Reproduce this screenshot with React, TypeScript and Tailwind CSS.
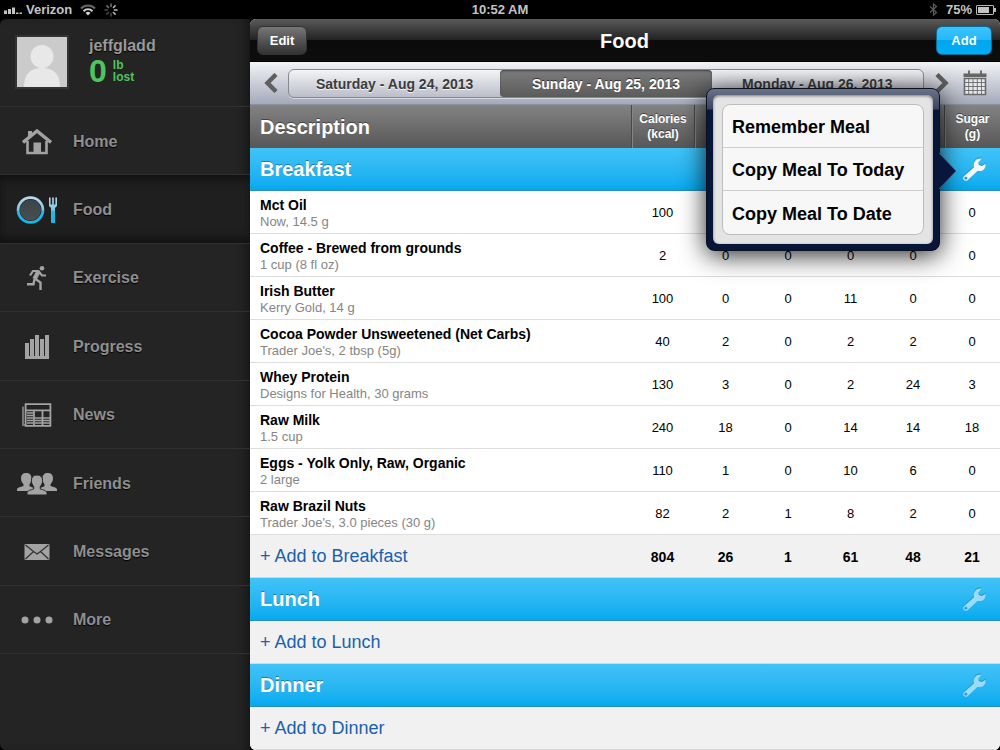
import type { ReactNode } from 'react';
import clsx from 'clsx';

interface FoodItem {
  name: string;
  detail: string;
  values: number[];
}

interface Meal {
  name: string;
  items: FoodItem[];
  totals?: number[];
}

const columns = [
  { label: 'Calories', unit: '(kcal)' },
  { label: 'Carbs', unit: '(g)' },
  { label: 'Fiber', unit: '(g)' },
  { label: 'Fat', unit: '(g)' },
  { label: 'Protein', unit: '(g)' },
  { label: 'Sugar', unit: '(g)' },
];

const meals: Meal[] = [
  {
    name: 'Breakfast',
    items: [
      { name: 'Mct Oil', detail: 'Now, 14.5 g', values: [100, 0, 0, 14, 0, 0] },
      { name: 'Coffee - Brewed from grounds', detail: '1 cup (8 fl oz)', values: [2, 0, 0, 0, 0, 0] },
      { name: 'Irish Butter', detail: 'Kerry Gold, 14 g', values: [100, 0, 0, 11, 0, 0] },
      { name: 'Cocoa Powder Unsweetened (Net Carbs)', detail: "Trader Joe's, 2 tbsp (5g)", values: [40, 2, 0, 2, 2, 0] },
      { name: 'Whey Protein', detail: 'Designs for Health, 30 grams', values: [130, 3, 0, 2, 24, 3] },
      { name: 'Raw Milk', detail: '1.5 cup', values: [240, 18, 0, 14, 14, 18] },
      { name: 'Eggs - Yolk Only, Raw, Organic', detail: '2 large', values: [110, 1, 0, 10, 6, 0] },
      { name: 'Raw Brazil Nuts', detail: "Trader Joe's, 3.0 pieces (30 g)", values: [82, 2, 1, 8, 2, 0] },
    ],
    totals: [804, 26, 1, 61, 48, 21],
  },
  { name: 'Lunch', items: [] },
  { name: 'Dinner', items: [] },
];

const days = ['Saturday - Aug 24, 2013', 'Sunday - Aug 25, 2013', 'Monday - Aug 26, 2013'];

const mealActions = ['Remember Meal', 'Copy Meal To Today', 'Copy Meal To Date'];

function HomeIcon() {
  return (
    <svg width="30" height="26" viewBox="0 0 30 26" fill="none">
      <path d="M6 10V2h4v4" fill="#a3a3a3" />
      <path d="M1 13.5 15 2l14 11.5" stroke="#a3a3a3" strokeWidth="3.4" />
      <path d="M5.5 12v12h19V12" stroke="#a3a3a3" strokeWidth="2.6" />
      <path d="M11.5 13.5h7.5V24h-7.5z" fill="#a3a3a3" />
    </svg>
  );
}

function FoodIcon() {
  return (
    <svg width="42" height="28" viewBox="0 0 42 28" fill="none">
      <defs>
        <linearGradient id="food" x1="0" y1="0" x2="0" y2="28" gradientUnits="userSpaceOnUse">
          <stop offset="0" stopColor="#c3dcec" />
          <stop offset="0.5" stopColor="#7cc4e6" />
          <stop offset="0.55" stopColor="#2bb6e8" />
          <stop offset="1" stopColor="#12b8ea" />
        </linearGradient>
        <linearGradient id="plate" x1="0" y1="0" x2="0" y2="1">
          <stop offset="0" stopColor="#39444a" />
          <stop offset="1" stopColor="#4a4f50" />
        </linearGradient>
      </defs>
      <circle cx="14.5" cy="14" r="12.4" stroke="url(#food)" strokeWidth="2.8" fill="#15171a" />
      <circle cx="14.5" cy="14" r="10.6" fill="url(#plate)" />
      <path d="M33 1.5h1.6v7h1.6v-7h1.6v7h1.6v-7H41v8.500l-2 2V27h-4V12l-2-2z" fill="url(#food)" />
    </svg>
  );
}

function ExerciseIcon() {
  return (
    <svg width="22" height="26" viewBox="0 0 22 26" fill="none" stroke="#a3a3a3">
      <circle cx="16" cy="3.2" r="2.3" fill="#a3a3a3" stroke="none" />
      <path d="M4 10.5 7 6h5.500l3.500 4.500h4" strokeWidth="2.2" />
      <path d="M12.5 6.5 8.5 14" strokeWidth="4.5" />
      <path d="M8.5 14 7.500 19.200H1" strokeWidth="2.4" />
      <path d="m9.5 14 5 3.500V25" strokeWidth="2.4" />
    </svg>
  );
}

function ProgressIcon() {
  return (
    <svg width="24" height="26" viewBox="0 0 24 26" fill="#a3a3a3">
      <path d="M0 9h4v13h1V5h4v17h1V1h4v21h1V5h4v17h1V1h4v24H0z" />
    </svg>
  );
}

function NewsIcon() {
  return (
    <svg width="30" height="24" viewBox="0 0 30 24" fill="none" stroke="#a3a3a3">
      <path d="M1 3.500V22h2" strokeWidth="2" stroke="#777" />
      <path d="M3.600 1.100h24.800v21.800H3.600z" strokeWidth="1.800" />
      <path d="M4 7.300h24M12 7.500V22M20.500 7.500V22" strokeWidth="1.800" />
      <path
        d="M5 10h6M5 12.500h6M5 15h6M5 17.500h6M5 20h6M13 15h7M13 17.500h7M13 20h7M21 15h7M21 17.500h7M21 20h7"
        strokeWidth="1.400"
      />
    </svg>
  );
}

function FriendsIcon() {
  return (
    <svg width="42" height="24" viewBox="0 0 42 24" fill="#a3a3a3">
      <path d="M10 1c3.800 0 5.500 2 5.500 5.300 0 2.800-.8 4.500-2 6v2l5 2V19H1v-1.500c0-2 4-2.600 6.500-3.500v-1.700c-1.300-1.500-2.500-3.200-2.500-6C5 3 6.700 1 10 1z" />
      <path d="M32 1c-3.800 0-5.500 2-5.500 5.300 0 2.800.8 4.500 2 6v2l-5 2V19h17.500v-1.500c0-2-4-2.600-6.500-3.500v-1.700c1.300-1.500 2.500-3.200 2.500-6C37 3 35.300 1 32 1z" />
      <path
        d="M21 3c3.600 0 5.600 2 5.600 5.500 0 2.600-1 4.500-2.300 6V17c2.500.8 6.700 1.700 6.700 3.800V23H11v-2.200c0-2.100 4.200-3 6.700-3.800v-2.500c-1.300-1.500-2.300-3.400-2.300-6C15.400 5 17.400 3 21 3z"
        stroke="#242424"
        strokeWidth="1"
      />
    </svg>
  );
}

function MessagesIcon() {
  return (
    <svg width="26" height="18" viewBox="0 0 26 18" fill="none">
      <rect x="0.500" y="1" width="25" height="16" rx="1" fill="#a3a3a3" />
      <path d="m1.500 2 8 6.500L13 11l3.500-2.500 8-6.500M1.500 16l8-7.500M24.500 16l-8-7.500" stroke="#303030" strokeWidth="1.200" />
    </svg>
  );
}

function MoreIcon() {
  return (
    <svg width="32" height="8" viewBox="0 0 32 8" fill="#a3a3a3">
      <circle cx="4" cy="4" r="3.500" />
      <circle cx="16" cy="4" r="3.500" />
      <circle cx="28" cy="4" r="3.500" />
    </svg>
  );
}

const navItems: { label: string; icon: ReactNode }[] = [
  { label: 'Home', icon: <HomeIcon /> },
  { label: 'Food', icon: <FoodIcon /> },
  { label: 'Exercise', icon: <ExerciseIcon /> },
  { label: 'Progress', icon: <ProgressIcon /> },
  { label: 'News', icon: <NewsIcon /> },
  { label: 'Friends', icon: <FriendsIcon /> },
  { label: 'Messages', icon: <MessagesIcon /> },
  { label: 'More', icon: <MoreIcon /> },
];

function StatusBar() {
  return (
    <div className="grid h-[19px] grid-cols-3 items-center bg-black px-1 text-[13px] leading-[19px] font-bold text-[#c4c4c4]">
      <div className="flex items-center gap-1">
        <svg width="18" height="8" viewBox="0 0 18 8" fill="#c4c4c4">
          <path d="M0 4.500h3V8H0zM4 3h3v5H4zM8 1.500h3V8H8zM12 6.500h2.500V8H12zM15.500 6.500H18V8h-2.500z" />
        </svg>
        <span>Verizon</span>
        <svg className="ml-1" width="16" height="12" viewBox="0 0 16 12" fill="none">
          <path d="M1 4.500c4-4 10-4 14 0" stroke="#666" strokeWidth="2" />
          <path d="M3.500 7.200c2.700-2.600 6.300-2.600 9 0" stroke="#d0d0d0" strokeWidth="2" />
          <path d="m8 11.500-2.500-2.600c1.500-1.400 3.500-1.400 5 0z" fill="#d0d0d0" />
        </svg>
        <svg className="ml-1" width="14" height="14" viewBox="0 0 14 14" strokeWidth="1.500" strokeLinecap="round">
          <path d="M7 1v2.500M2.800 2.800l1.700 1.700" stroke="#777" />
          <path d="M11.200 2.800 9.500 4.500M13 7h-2.500M11.200 11.200 9.500 9.500" stroke="#c0c0c0" />
          <path d="M7 13v-2.500M2.800 11.200l1.700-1.700M1 7h2.500" stroke="#4a4a4a" />
        </svg>
      </div>
      <div className="text-center">10:52 AM</div>
      <div className="flex items-center justify-end">
        <svg className="mr-2" width="9" height="13" viewBox="0 0 9 13" fill="none" stroke="#5c5c5c" strokeWidth="1.200">
          <path d="m1 3.500 6.500 6L4.500 12V1l3 2.500L1 9.500" />
        </svg>
        <span>75%</span>
        <svg className="ml-1" width="20" height="10" viewBox="0 0 20 10" fill="none">
          <rect x="0.500" y="0.500" width="17" height="9" rx="0.500" stroke="#b8b8b8" />
          <rect x="2" y="2" width="11" height="6" fill="#c4c4c4" />
          <path d="M18 3h2v4h-2z" fill="#b8b8b8" />
        </svg>
      </div>
    </div>
  );
}

function Sidebar() {
  return (
    <aside className="w-[250px] shrink-0 rounded-l-md bg-[#242424] shadow-[inset_-8px_0_8px_-4px_#161616]">
      <div className="flex h-[88px] items-start border-b border-[#303030] pt-4 pl-[15px]">
        <div className="border-2 border-[#333] bg-[#cbcbcb]">
          <svg width="50" height="50" viewBox="0 0 50 50" fill="#e8e8e8">
            <circle cx="25" cy="19.500" r="11.500" />
            <path d="M7 50c0-13 6-19 18-19s18 6 18 19z" />
          </svg>
        </div>
        <div className="ml-5 pt-[2px] font-bold">
          <div className="text-base leading-[18px] text-[#9a9a9a] [text-shadow:0_1px_1px_#000]">jeffgladd</div>
          <div className="flex items-center gap-[6px] text-[#50c45d]">
            <span className="text-[32px] leading-[32px]">0</span>
            <span className="text-[12px] leading-[12px]">
              lb
              <br />
              lost
            </span>
          </div>
        </div>
      </div>
      <nav className="grid h-[547px] grid-rows-8">
        {navItems.map((item) => (
          <a
            key={item.label}
            href="#"
            className={clsx(
              'flex items-center border-b border-[#303030] pt-[2px] text-base font-bold text-[#8f8f8f] [text-shadow:0_1px_1px_#000]',
              item.label === 'Food' && 'bg-[#1f1f1f] shadow-[inset_0_8px_8px_-4px_#111,inset_0_-8px_8px_-4px_#111]',
            )}
          >
            <span className="flex w-[73px] justify-center">{item.icon}</span>
            {item.label}
          </a>
        ))}
      </nav>
    </aside>
  );
}

function WrenchIcon({ active }: { active: boolean }) {
  return (
    <svg
      width="23"
      height="23"
      viewBox="0 0 24 24"
      fill={active ? '#f4f8fa' : '#9adcf8'}
      className="drop-shadow-[0_-1px_0_#1b8fc4]"
    >
      <path
        fillRule="evenodd"
        d="M19.300.7c-3-.7-5.600.5-7.100 2.900-1.100 2-1.200 4.200-.7 6.100L1.200 18.800c-1.500 1.400-1.300 3.200-.2 4.200 1.200 1.100 2.900 1.100 4-.1l10.300-9.600c4.500 1 8.700-1.300 8.200-7.300l-3.800 2.300-3.100-.9-.6-2.700zM3 19.200a1.600 1.600 0 1 1 0 3.200 1.600 1.600 0 0 1 0-3.200z"
      />
    </svg>
  );
}

function MealPopover() {
  return (
    <div className="absolute -top-[60px] right-[60px] z-10 w-[234px] rounded-lg border border-[#0a1020] bg-[linear-gradient(#6a7488_0,#39445f_20px,#07163a_21px,#071638_100%)] p-[6px] shadow-[0_4px_26px_rgba(0,0,0,0.85)]">
      <svg className="absolute top-[64px] -right-[18px]" width="18" height="36" viewBox="0 0 18 36">
        <path d="M0 0 17 18 0 36z" fill="#07163a" />
        <path d="M0 0 17 18 0 36" fill="none" stroke="#4c5b70" strokeWidth="0.800" />
      </svg>
      <div className="rounded-md bg-[#e4e4e4] p-[9px] shadow-[inset_0_1px_3px_#777]">
        <div className="divide-y divide-[#cfcfcf] rounded-lg border border-[#bdbdbd] bg-[#f7f7f7]">
          {mealActions.map((action) => (
            <button
              key={action}
              className="block h-[43px] w-full px-[9px] pt-[2px] text-left text-lg font-bold text-black"
            >
              {action}
            </button>
          ))}
        </div>
      </div>
    </div>
  );
}

function DateBar() {
  return (
    <div className="flex h-[43px] items-center border-b border-[#8e93a3] bg-linear-to-b from-[#f3f4f7] to-[#a5aaba] pr-[10px]">
      <button aria-label="Previous day" className="flex w-[38px] justify-center pl-1">
        <svg width="14" height="20" viewBox="0 0 14 20" fill="none" stroke="#5f5f5f" strokeWidth="4.500">
          <path d="M12 1.500 3.500 10l8.500 8.500" />
        </svg>
      </button>
      <div className="flex h-[29px] flex-1 overflow-hidden rounded-md border border-[#858994] bg-linear-to-b from-[#f4f4f6] to-[#bbbec9] shadow-[0_1px_0_#d5d8e0]">
        {days.map((day, i) => (
          <button
            key={day}
            className={clsx(
              'flex-1 pt-[2px] text-sm font-bold',
              i === 1
                ? 'rounded-sm bg-linear-to-b from-[#7c7c7c] to-[#5b5b5b] text-white shadow-[inset_0_1px_2px_#444] [text-shadow:0_-1px_0_#333]'
                : 'text-[#3b3b3b] [text-shadow:0_1px_0_#f5f5f5]',
            )}
          >
            {day}
          </button>
        ))}
      </div>
      <button aria-label="Next day" className="flex w-[36px] justify-center">
        <svg width="14" height="20" viewBox="0 0 14 20" fill="none" stroke="#5f5f5f" strokeWidth="4.500">
          <path d="M2 1.500 10.500 10 2 18.500" />
        </svg>
      </button>
      <button aria-label="Calendar" className="flex w-[30px] justify-center">
        <svg width="24" height="26" viewBox="0 0 24 26" fill="none" stroke="#6a6a6a">
          <path d="M0.500 3.500h23v3.500h-23z" fill="#666" stroke="none" />
          <path d="M6 0.500v4M18 0.500v4" strokeWidth="2" />
          <path d="M1.500 8.500h21v16h-21z" fill="#e6e8ee" strokeWidth="1.600" />
          <path d="M5.700 9v15M10 9v15M14.300 9v15M18.500 9v15M2 12.500h20M2 16.500h20M2 20.500h20" strokeWidth="0.900" />
        </svg>
      </button>
    </div>
  );
}

function MealSection({ meal, open }: { meal: Meal; open: boolean }) {
  return (
    <tbody>
      <tr>
        <th colSpan={7} className="h-[43px] border-b border-[#2b8dbb] bg-linear-to-b from-[#40c3f7] to-[#00aaef] p-0">
          <div className="relative flex h-[42px] items-center justify-between pr-[14px] pl-[10px]">
            <span className="text-xl font-bold text-white [text-shadow:0_-1px_0_#1b7fae]">{meal.name}</span>
            <button aria-label={`${meal.name} options`}>
              <WrenchIcon active={open} />
            </button>
            {open && <MealPopover />}
          </div>
        </th>
      </tr>
      {meal.items.map((item) => (
        <tr key={item.name} className="bg-white">
          <td className="h-[43px] border-b border-[#dedede] pt-[2px] pb-0 pl-[10px]">
            <div className="text-sm leading-[17px] font-bold text-black">{item.name}</div>
            <div className="text-[13px] leading-[16px] text-[#858585]">{item.detail}</div>
          </td>
          {item.values.map((value, i) => (
            <td key={i} className="border-b border-[#dedede] px-0 pt-[2px] pb-0 text-center text-[13px] text-black">
              {value}
            </td>
          ))}
        </tr>
      ))}
      <tr className="bg-[#f1f1f1]">
        <td colSpan={meal.totals ? 1 : 7} className="h-[43px] border-b border-[#d8d8d8] py-0 pl-[10px]">
          <button className="text-lg leading-[24px] text-[#1860b0]">+ Add to {meal.name}</button>
        </td>
        {meal.totals?.map((total, i) => (
          <td key={i} className="border-b border-[#d8d8d8] px-0 pt-[2px] pb-0 text-center text-sm font-bold text-black">
            {total}
          </td>
        ))}
      </tr>
    </tbody>
  );
}

export default function App() {
  return (
    <div className="flex min-h-screen flex-col bg-black font-['Liberation_Sans',Arial,sans-serif]">
      <StatusBar />
      <div className="flex flex-1">
        <Sidebar />
        <main className="min-w-0 flex-1 overflow-hidden rounded-md bg-[#f1f1f1]">
          <header className="grid h-[43px] grid-cols-[1fr_auto_1fr] items-center border-b border-black bg-[linear-gradient(#5a5a5a_0,#222_50%,#0b0b0b_50%,#0d0d0d_100%)] pr-[8px] pl-[7px]">
            <button className="h-[29px] w-[50px] justify-self-start rounded-md border border-[#333] bg-linear-to-b from-[#777] to-[#333] pt-[2px] text-[13px] font-bold text-white">
              Edit
            </button>
            <h1 className="pt-[2px] text-xl font-bold text-white">Food</h1>
            <button className="h-[29px] w-[56px] justify-self-end rounded-md border border-[#0b6a98] bg-[linear-gradient(#3cc3fb_0,#25b7f8_50%,#00a6f0_50%,#00aef5_100%)] pt-[2px] text-[13px] font-bold text-white">
              Add
            </button>
          </header>
          <DateBar />
          <table className="w-full table-fixed border-separate border-spacing-0">
            <colgroup>
              <col />
              <col className="w-[63px]" />
              <col className="w-[63px]" />
              <col className="w-[62px]" />
              <col className="w-[63px]" />
              <col className="w-[62px]" />
              <col className="w-[56px]" />
            </colgroup>
            <thead>
              <tr className="text-white [text-shadow:0_-1px_0_#444]">
                <th className="h-[43px] bg-linear-to-b from-[#838383] to-[#575757] py-0 pl-[10px] text-left text-xl font-bold">
                  Description
                </th>
                {columns.map((col) => (
                  <th
                    key={col.label}
                    className="border-l border-[#484848] bg-linear-to-b from-[#838383] to-[#575757] p-0 text-[12px] leading-[15px] font-bold shadow-[inset_1px_0_0_#858585]"
                  >
                    {col.label}
                    <br />
                    {col.unit}
                  </th>
                ))}
              </tr>
            </thead>
            {meals.map((meal) => (
              <MealSection key={meal.name} meal={meal} open={meal.name === 'Breakfast'} />
            ))}
          </table>
        </main>
      </div>
    </div>
  );
}
